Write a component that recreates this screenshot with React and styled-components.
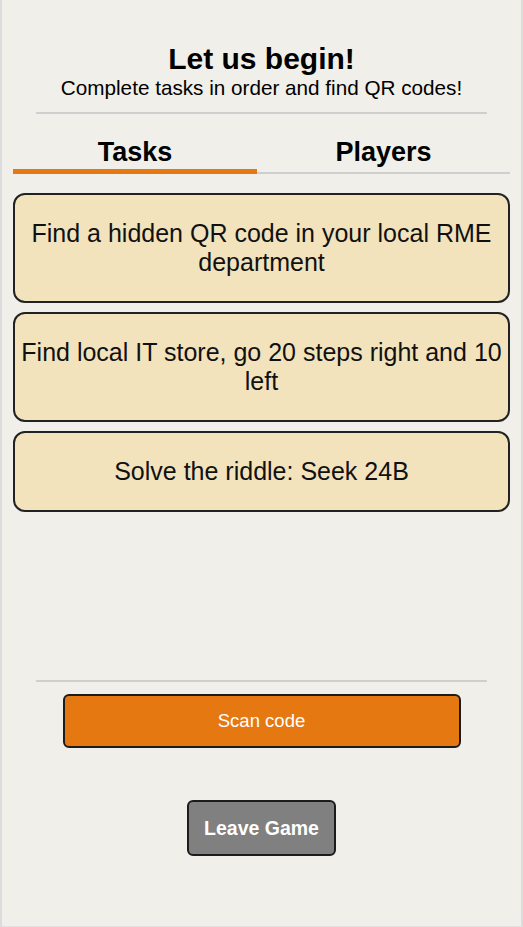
import React, { useState } from "react";
import styled, { createGlobalStyle } from "styled-components";

const tasks = [
    "Find a hidden QR code in your local RME department",
    "Find local IT store, go 20 steps right and 10 left",
    "Solve the riddle: Seek 24B",
];

function App() {
    const [tab, setTab] = useState("tasks");

    return (
        <>
            <GlobalStyle />
            <Page>
                <Header>
                    <Title>Let us begin!</Title>
                    <Subtitle>Complete tasks in order and find QR codes!</Subtitle>
                </Header>
                <Divider />
                <Tabs>
                    <Tab active={tab === "tasks"} onClick={() => setTab("tasks")}>Tasks</Tab>
                    <Tab active={tab === "players"} onClick={() => setTab("players")}>Players</Tab>
                </Tabs>
                <TaskList>
                    {tasks.map((t) => (
                        <TaskCard key={t}>{t}</TaskCard>
                    ))}
                </TaskList>
                <Divider />
                <ScanButton>Scan code</ScanButton>
                <LeaveButton>Leave Game</LeaveButton>
            </Page>
        </>
    );
}

const GlobalStyle = createGlobalStyle`
    html, body {
        margin: 0;
        padding: 0;
        background-color: #f0efea;
    }
    * {
        box-sizing: border-box;
    }
`;

const Page = styled.div`
    height: 927px;
    padding: 42px 11px 0 11px;
    border-left: 2px solid #dcdcdc;
    border-right: 2px solid #dcdcdc;
    border-bottom: 1px solid #e2e2e2;
    background-color: #f0efea;
    font-family: "Liberation Sans", Arial, sans-serif;
    display: flex;
    flex-direction: column;
    align-items: center;
`;

const Header = styled.div`
    text-align: center;
`;

const Title = styled.h1`
    margin: 0;
    font-size: 30px;
    font-weight: bold;
    color: #000;
`;

const Subtitle = styled.p`
    margin: 0;
    font-size: 20.7px;
    color: #000;
`;

const Divider = styled.div`
    width: 451px;
    height: 2px;
    margin-top: 12px;
    background-color: #cfcfcf;
`;

const Tabs = styled.div`
    width: 100%;
    display: grid;
    grid-template-columns: 244fr 253fr;
    align-items: end;
    margin-top: 23px;
`;

const Tab = styled.div`
    text-align: center;
    font-size: 27px;
    line-height: 31px;
    font-weight: bold;
    color: #000;
    padding-bottom: ${(p) => (p.active ? "1px" : "4px")};
    border-bottom: ${(p) => (p.active ? "5px solid #e67812" : "2px solid #cfcfcf")};
    cursor: pointer;
`;

const TaskList = styled.div`
    width: 100%;
    display: flex;
    flex-direction: column;
    gap: 9px;
    margin-top: 19px;
    margin-bottom: 156px;
`;

const TaskCard = styled.div`
    padding: 24px 4px;
    text-align: center;
    font-size: 25px;
    line-height: 29px;
    color: #111;
    background-color: #f2e3bd;
    border: 2px solid #222;
    border-radius: 12px;
`;

const ScanButton = styled.button`
    width: 398px;
    height: 54px;
    margin-top: 12px;
    background-color: #e67812;
    color: #fff;
    font-family: "Liberation Sans", Arial, sans-serif;
    font-size: 18.5px;
    border: 2px solid #1c1c1c;
    border-radius: 6px;
    cursor: pointer;
`;

const LeaveButton = styled.button`
    width: 149px;
    height: 56px;
    margin-top: 52px;
    background-color: #808080;
    color: #fff;
    font-family: "Liberation Sans", Arial, sans-serif;
    font-size: 19.5px;
    font-weight: bold;
    border: 2px solid #1c1c1c;
    border-radius: 6px;
    cursor: pointer;
`;

export default App;
